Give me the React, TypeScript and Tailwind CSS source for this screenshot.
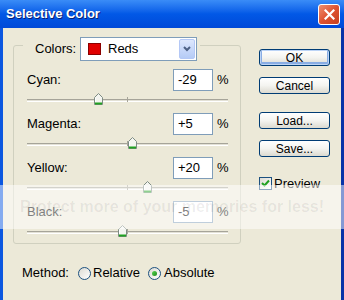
import type { ReactNode } from "react";

const rows = [
  { label: "Cyan:", value: -29 },
  { label: "Magenta:", value: 5 },
  { label: "Yellow:", value: 20 },
  { label: "Black:", value: -5 },
];

function fmt(v: number) {
  return v > 0 ? `+${v}` : `${v}`;
}

function XpButton({ children, primary }: { children: ReactNode; primary?: boolean }) {
  return (
    <button
      type="button"
      className={
        "flex h-[17px] w-[71px] items-center justify-center rounded-[3px] border border-[#003C74] bg-gradient-to-b from-white via-[#F4F4F0] to-[#DCDAD0] text-[12px] leading-none text-black " +
        (primary ? "shadow-[inset_0_0_0_1px_#BCD4F6,inset_0_-1px_0_2px_#89ADE4]" : "")
      }
    >
      {children}
    </button>
  );
}

function Thumb() {
  return (
    <svg width="9" height="12" viewBox="0 0 9 12">
      <path d="M0.5 4.5 L4.5 0.5 L8.5 4.5 V11.5 H0.5 Z" fill="#F4F5F0" stroke="#7E8C84" />
      <path d="M1 10.5 H8" stroke="#21A121" strokeWidth="2" />
      <path d="M1.5 9 V4.8" stroke="#ffffff" />
    </svg>
  );
}

function Slider({ value }: { value: number }) {
  return (
    <div className="relative h-[22px] w-[201px] pt-[8px]">
      <div className="h-[3px] border-t border-b border-t-[#A6A499] border-b-white bg-[#E3E1D6]" />
      <div className="absolute left-[100px] top-[6px] h-[5px] w-px bg-[#A6A499]" />
      <div className="absolute top-[2px]" style={{ left: 100 + value - 4 }}>
        <Thumb />
      </div>
    </div>
  );
}

function Radio({ checked }: { checked?: boolean }) {
  return (
    <span className="flex h-[13px] w-[13px] items-center justify-center rounded-full border border-[#1C5180] bg-gradient-to-br from-[#DCDBD3] to-white">
      {checked && (
        <span className="h-[5px] w-[5px] rounded-full bg-gradient-to-br from-[#55D551] to-[#1E8C1B]" />
      )}
    </span>
  );
}

export default function App() {
  return (
    <div className="relative h-[300px] w-[344px] overflow-hidden bg-[#ECE9D8] font-['Liberation_Sans',Arial,sans-serif] text-[12px] text-black">
      {/* title bar */}
      <div className="flex h-[28px] items-center bg-gradient-to-b from-[#3A8CF7] via-[#0258E6] to-[#0049D8] pl-[6px] pr-[4px]">
        <span className="text-[13px] font-bold text-white [text-shadow:1px_1px_0_#0A1F70]">
          Selective Color
        </span>
        <span className="ml-auto flex h-[21px] w-[22px] items-center justify-center rounded-[3px] border border-white bg-gradient-to-br from-[#EE8E6E] via-[#DE5230] to-[#C6401F]">
          <svg width="11" height="11" viewBox="0 0 11 11">
            <path d="M1.5 1.5 L9.5 9.5 M9.5 1.5 L1.5 9.5" stroke="white" strokeWidth="2.2" strokeLinecap="square" />
          </svg>
        </span>
      </div>

      <div className="flex h-[272px] border-l-[3px] border-r-[3px] border-l-[#0B57E0] border-r-[#0833A8]">
        {/* left column */}
        <div className="w-[240px] pl-[10px] pt-[9px]">
          <div className="relative z-10 ml-[10px] flex h-[24px] w-[177px] items-center bg-[#ECE9D8] pl-[12px] pr-[3px]">
            <span className="w-[45px] text-[13px]">Colors:</span>
            <div className="flex h-[24px] w-[117px] items-center border border-[#7F9DB9] bg-white pl-[7px] pr-px">
              <span className="h-[12px] w-[13px] border border-[#8A0000] bg-[#E00000]" />
              <span className="ml-[7px] text-[13px]">Reds</span>
              <span className="ml-auto flex h-[20px] w-[16px] items-center justify-center rounded-[2px] border border-[#B4C8F6] bg-gradient-to-b from-[#DDE7FD] to-[#B5CBF6]">
                <svg width="8" height="6" viewBox="0 0 8 6">
                  <path d="M1 1 L4 4 L7 1" fill="none" stroke="#4D6185" strokeWidth="2" />
                </svg>
              </span>
            </div>
          </div>

          <div className="-mt-[16px] h-[199px] w-[228px] rounded-[3px] border border-[#D0D0BF] pl-[13px] pr-[12px] pt-[23px]">
            {rows.map((r) => (
              <div key={r.label}>
                <div className="flex h-[22px] items-center">
                  <span className="flex-1 text-[13px]">{r.label}</span>
                  <div className="flex h-[22px] w-[40px] items-center border border-[#7F9DB9] bg-white pl-[4px] text-[13px]">
                    {fmt(r.value)}
                  </div>
                  <span className="w-[15px] pl-[4px] text-[13px]">%</span>
                </div>
                <Slider value={r.value} />
              </div>
            ))}
          </div>

          <div className="ml-[9px] mt-[19px] flex h-[20px] items-center text-[13px]">
            <span className="w-[56px]">Method:</span>
            <span className="flex w-[70px] items-center gap-[2px]">
              <Radio />
              Relative
            </span>
            <span className="flex items-center gap-[3px]">
              <Radio checked />
              Absolute
            </span>
          </div>
        </div>

        {/* right column */}
        <div className="flex flex-col pl-[16px] pt-[21px]">
          <XpButton primary>OK</XpButton>
          <div className="mt-[11px]">
            <XpButton>Cancel</XpButton>
          </div>
          <div className="mt-[18px]">
            <XpButton>Load...</XpButton>
          </div>
          <div className="mt-[11px]">
            <XpButton>Save...</XpButton>
          </div>
          <div className="mt-[17px] flex items-center gap-[2px] text-[13px]">
            <span className="flex h-[13px] w-[13px] items-center justify-center border border-[#1C5180] bg-gradient-to-br from-[#DCDBD3] to-white">
              <svg width="9" height="9" viewBox="0 0 9 9">
                <path d="M1 4 L3.5 6.5 L8 1.5" fill="none" stroke="#21A121" strokeWidth="2" />
              </svg>
            </span>
            Preview
          </div>
        </div>
      </div>

      {/* photo host watermark band */}
      <div className="absolute left-0 right-0 top-[185px] flex h-[44px] items-center justify-center bg-white/50 text-[16px] font-bold text-black/[0.07]">
        Protect more of your memories for less!
      </div>
    </div>
  );
}
